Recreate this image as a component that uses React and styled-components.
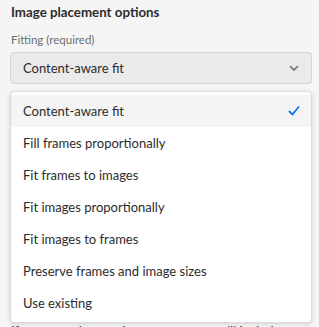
import React, { useState } from 'react';
import styled, { createGlobalStyle } from 'styled-components';

const GlobalStyle = createGlobalStyle`
  html, body {
    margin: 0;
    padding: 0;
    background: #f5f5f5;
  }
  body {
    font-family: Lato, "Liberation Sans", sans-serif;
    color: #2c2c2c;
  }
`;

const Page = styled.div`
  padding: 3px 7px 0 10px;
  width: 319px;
  height: 327px;
  box-sizing: border-box;
  overflow: hidden;
`;

const Title = styled.h2`
  margin: 0;
  font-size: 13.3px;
  font-weight: 700;
  line-height: 18px;
  color: #2c2c2c;
  padding-left: 1px;
`;

const Label = styled.div`
  margin-top: 11px;
  font-size: 11.5px;
  line-height: 16px;
  color: #6e6e6e;
  padding-left: 1px;
`;

const Field = styled.div`
  position: relative;
  margin-top: 4px;
`;

const Trigger = styled.button`
  width: 100%;
  height: 32px;
  box-sizing: border-box;
  display: flex;
  align-items: center;
  justify-content: space-between;
  padding: 0 12px 0 12px;
  background: #eaeaea;
  border: 1px solid #d3d3d3;
  border-radius: 4px;
  font-family: inherit;
  font-size: 13px;
  color: #2c2c2c;
  cursor: pointer;
`;

const Popover = styled.ul`
  position: absolute;
  top: 39px;
  left: 0;
  right: 0;
  margin: 0;
  padding: 3px 0 3px;
  list-style: none;
  background: #fff;
  border: 1px solid #dadada;
  border-radius: 4px;
  box-shadow: 0 1px 4px rgba(0, 0, 0, 0.15);
  z-index: 2;
`;

const Item = styled.li`
  height: 32px;
  display: flex;
  align-items: center;
  justify-content: space-between;
  padding: 0 11px 0 12px;
  font-size: 13px;
  color: #2c2c2c;
  background: ${(p) => (p.$active ? '#f4f4f4' : 'transparent')};
  cursor: pointer;
`;

const Note = styled.p`
  margin: 238px 0 0 1px;
  font-size: 13px;
  line-height: 18px;
  color: #2c2c2c;
  white-space: nowrap;
`;

const Chevron = () => (
  <svg width="10" height="10" viewBox="0 0 10 10" fill="none">
    <path d="M1.5 3.5 L5 7 L8.5 3.5" stroke="#6e6e6e" strokeWidth="1.6" strokeLinecap="round" strokeLinejoin="round" />
  </svg>
);

const Check = () => (
  <svg width="12" height="12" viewBox="0 0 12 12" fill="none">
    <path d="M1.5 6.5 L4.5 9.5 L10.5 2" stroke="#1473e6" strokeWidth="1.8" strokeLinecap="round" strokeLinejoin="round" />
  </svg>
);

const options = [
  'Content-aware fit',
  'Fill frames proportionally',
  'Fit frames to images',
  'Fit images proportionally',
  'Fit images to frames',
  'Preserve frames and image sizes',
  'Use existing',
];

export default function App() {
  const [value, setValue] = useState(options[0]);

  return (
    <>
      <GlobalStyle />
      <Page>
        <Title>Image placement options</Title>
        <Label>Fitting (required)</Label>
        <Field>
          <Trigger>
            <span>{value}</span>
            <Chevron />
          </Trigger>
          <Popover>
            {options.map((o) => (
              <Item key={o} $active={o === value} onClick={() => setValue(o)}>
                <span>{o}</span>
                {o === value && <Check />}
              </Item>
            ))}
          </Popover>
        </Field>
        <Note>If any records contain overset text, we'll include a</Note>
      </Page>
    </>
  );
}
